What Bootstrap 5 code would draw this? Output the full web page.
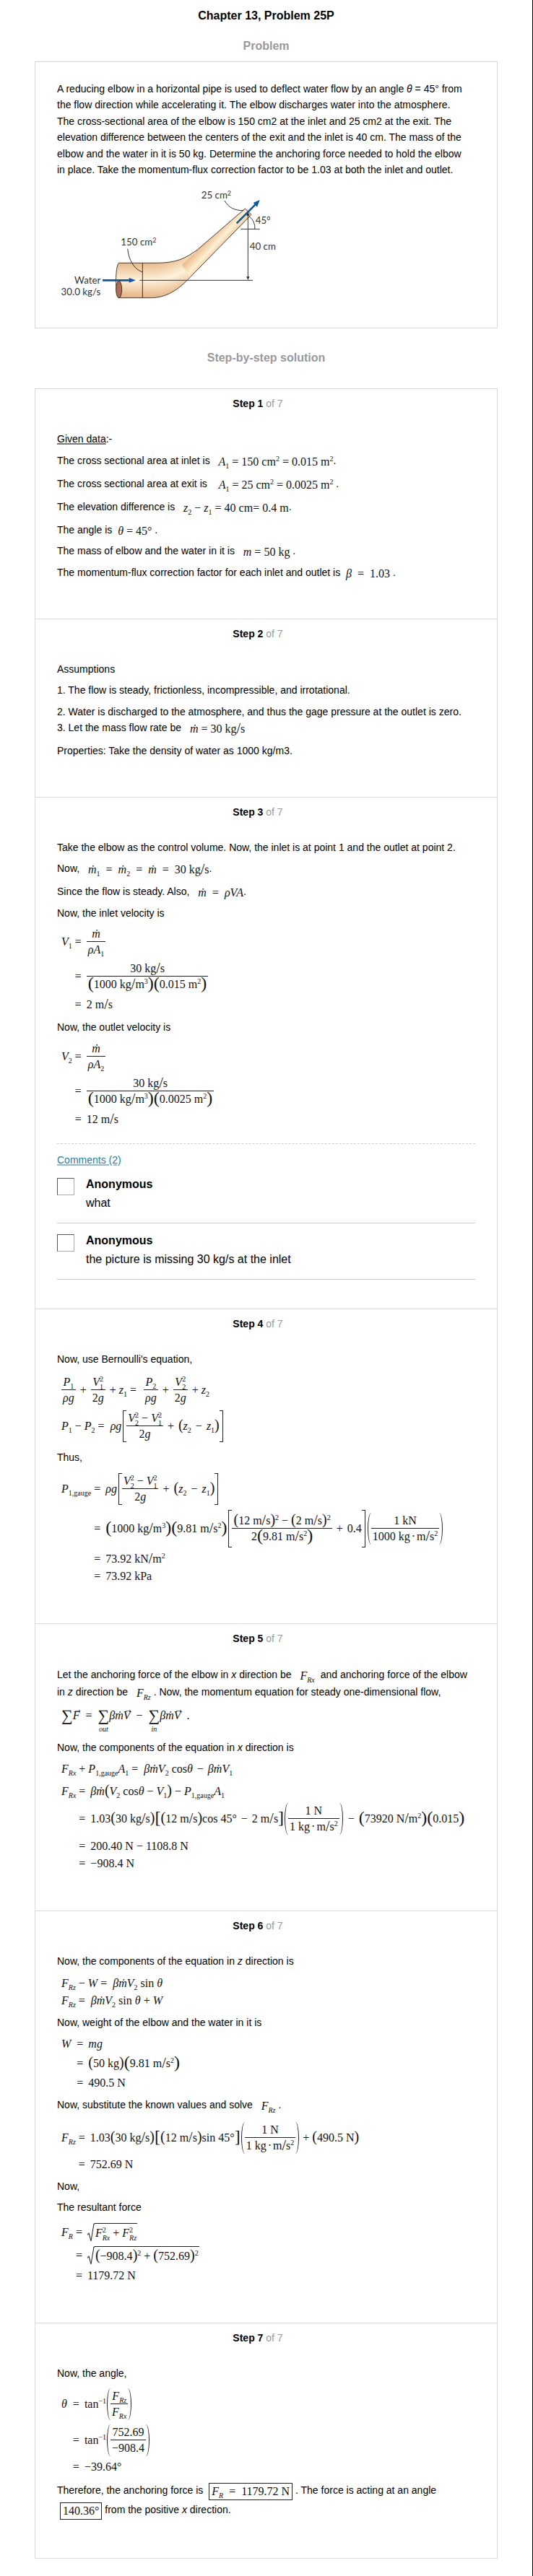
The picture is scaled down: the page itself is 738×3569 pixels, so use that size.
<!DOCTYPE html>
<html lang="en">
<head>
<meta charset="utf-8">
<meta name="viewport" content="width=device-width, initial-scale=1">
<title>Chapter 13, Problem 25P</title>
<link href="https://cdn.jsdelivr.net/npm/bootstrap@5.3.0/dist/css/bootstrap.min.css" rel="stylesheet">
<style>
body{font-family:"Liberation Sans",Arial,sans-serif;font-size:14px;line-height:1.6;color:#000;background:#fff;border-right:1px solid #000}
.page{padding:9px 48px 26px}
h1,h2{font-size:16px;line-height:26px;font-weight:700;margin:0}
h2{color:#999}
.solve{padding:28px 0 29px}
.panel{border:1px solid #d9d9d9;border-radius:0;background:#fff}
.prob{padding:26px 30px 30px}
.step{padding:9px 30px 46px}
.step.tight{padding-bottom:40px}
.step+.step{border-top:1px solid #d9d9d9}
.step h3{font-size:14px;line-height:22px;font-weight:700;margin:0 0 27px;padding-right:23px;text-align:center}
.step h3 span{font-weight:400;color:#999}
p{margin:0 0 7px}
p.tall{line-height:22px;padding-bottom:3px}
p.roomy{line-height:24px}
p.boxed{line-height:26px}
u{text-decoration-color:#777;text-decoration-thickness:2px}
/* formulas */
.mx{font:16px/16px "Liberation Serif","Times New Roman",serif;color:#111;white-space:pre}
span.mx{vertical-align:-2px;margin-left:4px}
.mx sub,.mx sup{font-size:10px;line-height:0;position:static}
.mx sub{vertical-align:-4px}
.mx sup{vertical-align:6px}
.eqn{display:grid;grid-template-columns:max-content max-content max-content;align-items:center;margin:0 0 7px;padding-left:6px}
.eqn>*{display:flex;align-items:center}
.eqn>.wide{grid-column:1/-1}
.eqn>.rel{padding:0 7px 0 4px;grid-column:2}
.eqn>.limits{align-items:flex-start;line-height:22px;padding-top:3px}
.h24{height:24px}.h26{height:26px}.h30{height:30px}.h32{height:32px}.h40{height:40px}.h42{height:42px}.h50{height:50px}.h52{height:52px}.h60{height:60px}
.fr{display:inline-flex;flex-direction:column;align-items:center}
.fr>span{height:22px;line-height:22px;padding:0 2px}
.fr>span:first-child{border-bottom:1px solid #222;align-self:stretch;text-align:center}
.ss{display:inline-flex;flex-direction:column;font-size:10px;line-height:11px;vertical-align:6px}
.q{font-size:24px;line-height:0;vertical-align:-1px}
.q2,.sl{font-size:20px;line-height:0}
.sl{vertical-align:-1px}
.op{padding:0 2px}
.big,.sqb{display:inline-flex;align-items:center;position:relative;padding:0 6px}
.sqb{padding:0 7px}
.big::before,.big::after,.sqb::before,.sqb::after{content:"";position:absolute;top:0;bottom:0;width:5px;border:0 solid #222}
.big::before{left:1px;border-left-width:1px;border-radius:100% 0 0 100%/50% 0 0 50%}
.big::after{right:1px;border-right-width:1px;border-radius:0 100% 100% 0/0 50% 50% 0}
.sqb::before{left:2px;border-width:1px 0 1px 1px}
.sqb::after{right:2px;border-width:1px 1px 1px 0}
.sum{display:inline-flex;flex-direction:column;align-items:center;font-size:22px;line-height:22px}
.sum small{font-size:10px;line-height:10px;font-style:italic;margin-top:3px}
.vec{position:relative}
.vec::before{content:"→";position:absolute;left:1px;top:-4px;font-size:12px;line-height:12px;font-style:normal}
.root{display:inline-flex}
.root svg{width:10px;align-self:stretch}
.root>span{height:26px;line-height:24px;border-top:1px solid #222;padding:1px 1px 0}
.ans{display:inline-block;border:1px solid #222;padding:3px;vertical-align:middle}
/* comments */
.talk{border-top:1px dashed #ccc;margin-top:20px;padding-top:11px}
.talk a{color:#1d7da8;text-decoration-color:#8fbdd6;text-decoration-thickness:2px}
.notes{padding-top:14px}
.note{font-size:16px;line-height:26px;border-bottom:1px solid #ccc;padding-bottom:14px;margin-bottom:15px}
.pic{width:24px;height:24px;border:1px solid;border-color:#555 #aaa #aaa #555;flex:none}
.note .who{line-height:18px;margin-bottom:4px;font-weight:700}
</style>
<script src="https://cdn.jsdelivr.net/npm/bootstrap@5.3.0/dist/js/bootstrap.bundle.min.js"></script>
</head>
<body>
<main class="page">
<h1 class="text-center">Chapter 13, Problem 25P</h1>
<h2 class="text-center pt-3 pb-2">Problem</h2>
<section class="panel prob">
<p class="mb-1 pe-2">A reducing elbow in a horizontal pipe is used to deflect water flow by an angle <i>θ</i> = 45° from the flow direction while accelerating it. The elbow discharges water into the atmosphere. The cross-sectional area of the elbow is 150 cm2 at the inlet and 25 cm2 at the exit. The elevation difference between the centers of the exit and the inlet is 40 cm. The mass of the elbow and the water in it is 50 kg. Determine the anchoring force needed to hold the elbow in place. Take the momentum-flux correction factor to be 1.03 at both the inlet and outlet.</p>
<svg class="d-block" width="310" height="174" viewBox="57 0 930 522" role="img" aria-label="Reducing elbow">
<defs>
<linearGradient id="pipe" x1="0" y1="343" x2="0" y2="488" gradientUnits="userSpaceOnUse"><stop offset="0" stop-color="#e8b98a"/><stop offset=".5" stop-color="#fdf3d9"/><stop offset="1" stop-color="#e6b283"/></linearGradient>
<linearGradient id="arm" x1="660" y1="270" x2="716" y2="322" gradientUnits="userSpaceOnUse"><stop offset="0" stop-color="#ecc093"/><stop offset=".5" stop-color="#fdf0d2"/><stop offset="1" stop-color="#e8b98a"/></linearGradient>
<radialGradient id="bend" cx="445" cy="150" r="340" gradientUnits="userSpaceOnUse"><stop offset=".56" stop-color="#e8b98a"/><stop offset=".78" stop-color="#fdf3d9"/><stop offset="1" stop-color="#e6b283"/></radialGradient>
<clipPath id="elbow"><path d="M313 343H470C550 343 590 325 640 288L838 117L864 142L612 400C560 456 510 488 445 488H313C298 470 298 360 313 343Z"/></clipPath>
</defs>
<g clip-path="url(#elbow)">
<rect x="290" y="330" width="160" height="170" fill="url(#pipe)"/>
<path d="M449 330H560L610 290L660 420L560 500H449Z" fill="url(#bend)"/>
<path d="M575 350L850 90L880 150L620 420Z" fill="url(#arm)"/>
</g>
<path d="M313 343H470C550 343 590 325 640 288L838 117L864 142L612 400C560 456 510 488 445 488H313C298 470 298 360 313 343Z" fill="none" stroke="#4a3b31" stroke-width="3"/>
<ellipse cx="314" cy="453" rx="12" ry="35" fill="#ad6e52" stroke="#4a3026" stroke-width="3"/>
<g fill="none" stroke="#333" stroke-width="3"><path d="M412 343V488M400 415H870M350 284C355 330 375 368 412 381M753 84C768 112 795 126 832 125M820 202H899M850 140V405M855 150C872 162 880 182 878 202"/></g>
<path d="M850 130L844 146H856ZM850 414L844 400H856Z" fill="#222"/>
<g stroke="#0a57a8" stroke-width="8" fill="#0a57a8"><path d="M246 415H362M803 178L880 101"/><path stroke="none" d="M384 415L356 405V425ZM899 81L872 93L888 110Z"/></g>
<g font-family="Lato,sans-serif" font-size="40" fill="#333"><text x="656" y="76">25 cm<tspan font-size="27" dy="-13">2</tspan></text><text x="322" y="270">150 cm<tspan font-size="27" dy="-13">2</tspan></text><text x="881" y="181">45°</text><text x="857" y="289">40 cm</text><text x="238" y="430" text-anchor="end">Water</text><text x="238" y="477" text-anchor="end">30.0 kg/s</text></g>
</svg>
</section>

<h2 class="text-center solve">Step-by-step solution</h2>
<div class="panel">
<section class="step">
<h3>Step 1 <span>of 7</span></h3>
<p><u>Given data</u>:-</p>
<p class="tall">The cross sectional area at inlet is <span class="mx"> <i>A</i><sub>1</sub> = 150 cm<sup>2</sup> = 0.015 m<sup>2</sup></span>.</p>
<p class="tall">The cross sectional area at exit is <span class="mx">  <i>A</i><sub>1</sub> = 25 cm<sup>2</sup> = 0.0025 m<sup>2</sup></span> .</p>
<p class="tall">The elevation difference is <span class="mx"> <i>z</i><sub>2</sub> − <i>z</i><sub>1</sub> = 40 cm= 0.4 m</span>.</p>
<p>The angle is <span class="mx"><i>θ</i> = 45°</span> .</p>
<p>The mass of elbow and the water in it is <span class="mx"> <i>m</i> = 50 kg</span> .</p>
<p>The momentum-flux correction factor for each inlet and outlet is <span class="mx"><i>β</i>  =  1.03</span> .</p>
</section>

<section class="step">
<h3>Step 2 <span>of 7</span></h3>
<p>Assumptions</p>
<p>1. The flow is steady, frictionless, incompressible, and irrotational.</p>
<p class="tall">2. Water is discharged to the atmosphere, and thus the gage pressure at the outlet is zero.<br>3. Let the mass flow rate be <span class="mx"> <i>ṁ</i> = 30 kg<span class="sl">/</span>s</span></p>
<p>Properties: Take the density of water as 1000 kg/m3.</p>
</section>

<section class="step tight">
<h3>Step 3 <span>of 7</span></h3>
<p>Take the elbow as the control volume. Now, the inlet is at point 1 and the outlet at point 2.</p>
<p class="tall">Now, <span class="mx"> <i>ṁ</i><sub>1</sub>  =  <i>ṁ</i><sub>2</sub>  =  <i>ṁ</i>  =  30 kg<span class="sl">/</span>s</span>.</p>
<p>Since the flow is steady. Also, <span class="mx"> <i>ṁ</i>  =  <i>ρVA</i></span>.</p>
<p>Now, the inlet velocity is</p>
<div class="eqn mx">
<div class="h42"><span><i>V</i><sub>1</sub></span></div><div class="rel">=</div><div><span class="fr"><span><i>ṁ</i></span><span><i>ρA</i><sub>1</sub></span></span></div>
<div class="rel h52">=</div><div><span class="fr"><span>30 kg<span class="sl">/</span>s</span><span><span class="q">(</span>1000 kg<span class="sl">/</span>m<sup>3</sup><span class="q">)(</span>0.015 m<sup>2</sup><span class="q">)</span></span></span></div>
<div class="rel h26">=</div><div><span>2 m<span class="sl">/</span>s</span></div>
</div>
<p>Now, the outlet velocity is</p>
<div class="eqn mx">
<div class="h42"><span><i>V</i><sub>2</sub></span></div><div class="rel">=</div><div><span class="fr"><span><i>ṁ</i></span><span><i>ρA</i><sub>2</sub></span></span></div>
<div class="rel h52">=</div><div><span class="fr"><span>30 kg<span class="sl">/</span>s</span><span><span class="q">(</span>1000 kg<span class="sl">/</span>m<sup>3</sup><span class="q">)(</span>0.0025 m<sup>2</sup><span class="q">)</span></span></span></div>
<div class="rel h26">=</div><div><span>12 m<span class="sl">/</span>s</span></div>
</div>
<div class="talk">
<a href="#comments">Comments (2)</a>
<div id="comments" class="notes">
<div class="note d-flex"><span class="pic" role="img" aria-label="avatar"></span><div class="ps-3"><div class="who">Anonymous</div><div>what</div></div></div>
<div class="note d-flex mb-0"><span class="pic" role="img" aria-label="avatar"></span><div class="ps-3"><div class="who">Anonymous</div><div>the picture is missing 30 kg/s at the inlet</div></div></div>
</div>
</div>
</section>

<section class="step">
<h3>Step 4 <span>of 7</span></h3>
<p>Now, use Bernoulli's equation,</p>
<div class="eqn mx">
<div class="wide h50"><span class="fr"><span><i>P</i><sub>1</sub></span><span><i>ρg</i></span></span><span class="op"> + </span><span class="fr"><span><i>V</i><span class="ss"><span>2</span><span>1</span></span></span><span>2<i>g</i></span></span><span class="op"> + <i>z</i><sub>1</sub> =  </span><span class="fr"><span><i>P</i><sub>2</sub></span><span><i>ρg</i></span></span><span class="op"> + </span><span class="fr"><span><i>V</i><span class="ss"><span>2</span><span>2</span></span></span><span>2<i>g</i></span></span><span class="op"> + <i>z</i><sub>2</sub></span></div>
<div class="wide h50"><span><i>P</i><sub>1</sub> − <i>P</i><sub>2</sub> =  <i>ρg</i></span><span class="sqb"><span class="fr"><span><i>V</i><span class="ss"><span>2</span><span>2</span></span> − <i>V</i><span class="ss"><span>2</span><span>1</span></span></span><span>2<i>g</i></span></span><span> <span class="op">+</span> <span class="q2">(</span><i>z</i><sub>2</sub> <span class="op">−</span> <i>z</i><sub>1</sub><span class="q2">)</span></span></span></div>
</div>
<p>Thus,</p>
<div class="eqn mx">
<div class="h50"><span><i>P</i><sub>1,gauge</sub></span></div><div class="rel">=</div><div><i>ρg</i><span class="sqb"><span class="fr"><span><i>V</i><span class="ss"><span>2</span><span>2</span></span> − <i>V</i><span class="ss"><span>2</span><span>1</span></span></span><span>2<i>g</i></span></span><span> <span class="op">+</span> <span class="q2">(</span><i>z</i><sub>2</sub> <span class="op">−</span> <i>z</i><sub>1</sub><span class="q2">)</span></span></span></div>
<div class="rel h60">=</div><div><span><span class="q">(</span>1000 kg<span class="sl">/</span>m<sup>3</sup><span class="q">)(</span>9.81 m<span class="sl">/</span>s<sup>2</sup><span class="q">)</span></span><span class="sqb py-1"><span class="fr"><span><span class="q2">(</span>12 m<span class="sl">/</span>s<span class="q2">)</span><sup>2</sup> − <span class="q2">(</span>2 m<span class="sl">/</span>s<span class="q2">)</span><sup>2</sup></span><span>2<span class="q">(</span>9.81 m<span class="sl">/</span>s<sup>2</sup><span class="q">)</span></span></span><span> <span class="op">+</span> 0.4</span></span><span class="big"><span class="fr"><span>1 kN</span><span>1000 kg<span class="op">·</span>m<span class="sl">/</span>s<sup>2</sup></span></span></span></div>
<div class="rel h24">=</div><div><span>73.92 kN<span class="sl">/</span>m<sup>2</sup></span></div>
<div class="rel h24">=</div><div>73.92 kPa</div>
</div>
</section>

<section class="step">
<h3>Step 5 <span>of 7</span></h3>
<p class="roomy">Let the anchoring force of the elbow in <i>x</i> direction be <span class="mx"> <i>F<sub>Rx</sub></i> </span> and anchoring force of the elbow in <i>z</i> direction be <span class="mx"> <i>F<sub>Rz</sub></i></span> . Now, the momentum equation for steady one-dimensional flow,</p>
<div class="eqn mx">
<div class="wide h40 limits"><span class="sum">∑</span><i class="vec">F</i><span>  =  </span><span class="sum">∑<small>out</small></span><i>βṁ</i><i class="vec">V</i><span>  −  </span><span class="sum">∑<small>in</small></span><i>βṁ</i><i class="vec">V</i><span>  .</span></div>
</div>
<p>Now, the components of the equation in <i>x</i> direction is</p>
<div class="eqn mx">
<div class="wide h24"><span><i>F<sub>Rx</sub></i> + <i>P</i><sub>1,gauge</sub><i>A</i><sub>1</sub> =  <i>βṁV</i><sub>2</sub> cos<i>θ</i> <span class="op">−</span> <i>βṁV</i><sub>1</sub></span></div>
</div>
<div class="eqn mx">
<div class="h24"><span><i>F<sub>Rx</sub></i></span></div><div class="rel">=</div><div><span><i>βṁ</i><span class="q2">(</span><i>V</i><sub>2</sub> cos<i>θ</i> − <i>V</i><sub>1</sub><span class="q2">)</span> − <i>P</i><sub>1,gauge</sub><i>A</i><sub>1</sub></span></div>
<div class="rel h52">=</div><div><span>1.03<span class="q2">(</span>30 kg<span class="sl">/</span>s<span class="q2">)</span><span class="q">[</span><span class="q2">(</span>12 m<span class="sl">/</span>s<span class="q2">)</span>cos 45° <span class="op">−</span> 2 m<span class="sl">/</span>s<span class="q">]</span></span><span class="big"><span class="fr"><span>1 N</span><span>1 kg<span class="op">·</span>m<span class="sl">/</span>s<sup>2</sup></span></span></span><span> <span class="op">−</span> <span class="q">(</span>73920 N<span class="sl">/</span>m<sup>2</sup><span class="q">)(</span>0.015<span class="q">)</span></span></div>
<div class="rel h24">=</div><div>200.40 N − 1108.8 N</div>
<div class="rel h24">=</div><div>−908.4 N</div>
</div>
</section>

<section class="step">
<h3>Step 6 <span>of 7</span></h3>
<p>Now, the components of the equation in <i>z</i> direction is</p>
<div class="eqn mx">
<div class="wide h24"><span><i>F<sub>Rz</sub></i> − <i>W</i> =  <i>βṁV</i><sub>2</sub> sin <i>θ</i></span></div>
<div class="wide h24"><span><i>F<sub>Rz</sub></i> =  <i>βṁV</i><sub>2</sub> sin <i>θ</i> + <i>W</i></span></div>
</div>
<p>Now, weight of the elbow and the water in it is</p>
<div class="eqn mx">
<div class="h24 pe-1"><i>W</i></div><div class="rel">=</div><div><i>mg</i></div>
<div class="rel h30">=</div><div><span><span class="q2">(</span>50 kg<span class="q2">)</span><span class="q">(</span>9.81 m<span class="sl">/</span>s<sup>2</sup><span class="q">)</span></span></div>
<div class="rel h24">=</div><div>490.5 N</div>
</div>
<p class="tall">Now, substitute the known values and solve <span class="mx"> <i>F<sub>Rz</sub></i></span> .</p>
<div class="eqn mx">
<div class="h50"><span><i>F<sub>Rz</sub></i></span></div><div class="rel">=</div><div><span>1.03<span class="q2">(</span>30 kg<span class="sl">/</span>s<span class="q2">)</span><span class="q">[</span><span class="q2">(</span>12 m<span class="sl">/</span>s<span class="q2">)</span>sin 45°<span class="q">]</span></span><span class="big"><span class="fr"><span>1 N</span><span>1 kg<span class="op">·</span>m<span class="sl">/</span>s<sup>2</sup></span></span></span><span> + <span class="q2">(</span>490.5 N<span class="q2">)</span></span></div>
<div class="rel h24">=</div><div>752.69 N</div>
</div>
<p>Now,</p>
<p>The resultant force</p>
<div class="eqn mx">
<div class="h32"><span><i>F<sub>R</sub></i></span></div><div class="rel">=</div><div><span class="root"><svg viewBox="0 0 10 24" preserveAspectRatio="none" aria-hidden="true"><path d="M0 15L2 13L5 23L9 1H10" fill="none" stroke="#222"/></svg><span><i>F</i><span class="ss"><span>2</span><i>Rx</i></span> + <i>F</i><span class="ss"><span>2</span><i>Rz</i></span></span></span></div>
<div class="rel h32">=</div><div><span class="root"><svg viewBox="0 0 10 24" preserveAspectRatio="none" aria-hidden="true"><path d="M0 15L2 13L5 23L9 1H10" fill="none" stroke="#222"/></svg><span><span class="q2">(</span>−908.4<span class="q2">)</span><sup>2</sup> + <span class="q2">(</span>752.69<span class="q2">)</span><sup>2</sup></span></span></div>
<div class="rel h24">=</div><div>1179.72 N</div>
</div>
</section>

<section class="step">
<h3>Step 7 <span>of 7</span></h3>
<p>Now, the angle,</p>
<div class="eqn mx">
<div class="h50 pe-1"><i>θ</i></div><div class="rel">=</div><div><span>tan<sup>−1</sup></span><span class="big"><span class="fr"><span><i>F<sub>Rz</sub></i></span><span><i>F<sub>Rx</sub></i></span></span></span></div>
<div class="rel h50">=</div><div><span>tan<sup>−1</sup></span><span class="big"><span class="fr"><span>752.69</span><span>−908.4</span></span></span></div>
<div class="rel h24">=</div><div>−39.64°</div>
</div>
<p class="boxed">Therefore, the anchoring force is <span class="mx ans"><i>F<sub>R</sub></i>  =  1179.72 N</span> . The force is acting at an angle <span class="mx ans">140.36°</span> from the positive <i>x</i> direction.</p>
</section>
</div>
</main>
</body>
</html>
